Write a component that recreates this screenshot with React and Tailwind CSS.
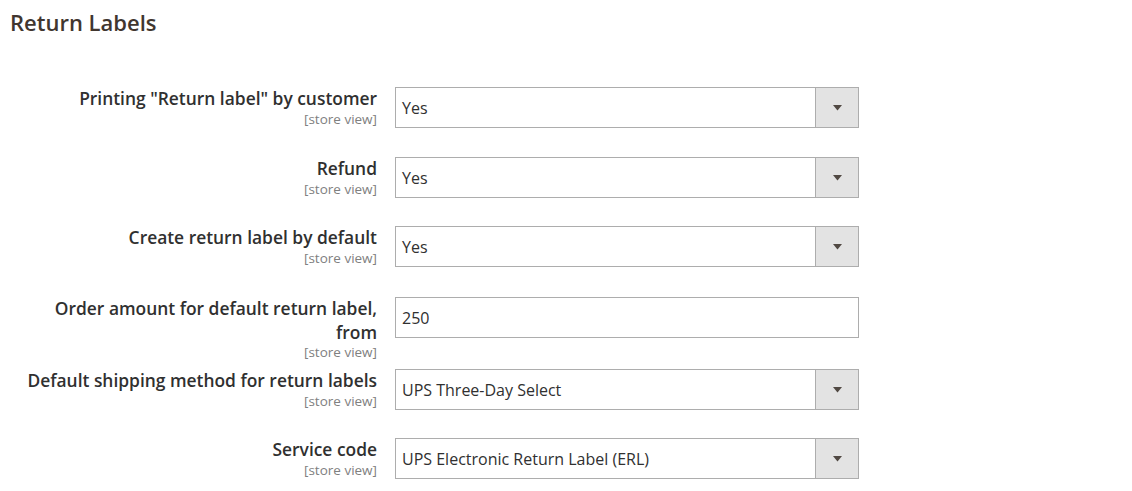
import React from "react";

const rows = [
  { label: ['Printing "Return label" by customer'], value: "Yes", type: "select", top: "mt-[51px]" },
  { label: ["Refund"], value: "Yes", type: "select", top: "mt-[29px]" },
  { label: ["Create return label by default"], value: "Yes", type: "select", top: "mt-[28px]" },
  { label: ["Order amount for default return label,", "from"], value: "250", type: "input", top: "mt-[30px]" },
  { label: ["Default shipping method for return labels"], value: "UPS Three-Day Select", type: "select", top: "mt-[9px]" },
  { label: ["Service code"], value: "UPS Electronic Return Label (ERL)", type: "select", top: "mt-[28px]" },
];

const Field = ({ type, value }) => (
  <div className="flex h-[41px] w-[464px] border border-[#adadad] bg-white">
    <div className="flex flex-1 items-center pl-[6px] text-[16px] text-[#303030]">{value}</div>
    {type === "select" && (
      <div className="flex w-[43px] items-center justify-center border-l border-[#adadad] bg-[#e3e3e3]">
        <svg width="9" height="6" viewBox="0 0 9 6">
          <path d="M0 0h9L4.5 5.5z" fill="#514943" />
        </svg>
      </div>
    )}
  </div>
);

export default function App() {
  return (
    <div className="min-h-screen bg-white font-['Open_Sans',sans-serif] text-[#303030]">
      <h2 className="pl-[10px] pt-[8px] text-[22px] font-semibold leading-[28px] text-[#41362f]">
        Return Labels
      </h2>
      {rows.map((r, i) => (
        <div key={i} className={`flex items-start gap-[18px] ${r.top}`}>
          <div className="w-[377px] text-right">
            {r.label.map((l, j) => (
              <div key={j} className="text-[17.4px] font-semibold leading-[23.5px]">
                {l}
              </div>
            ))}
            <div className="text-[13.5px] leading-[16px] text-[#808080]">[store view]</div>
          </div>
          <Field type={r.type} value={r.value} />
        </div>
      ))}
    </div>
  );
}
